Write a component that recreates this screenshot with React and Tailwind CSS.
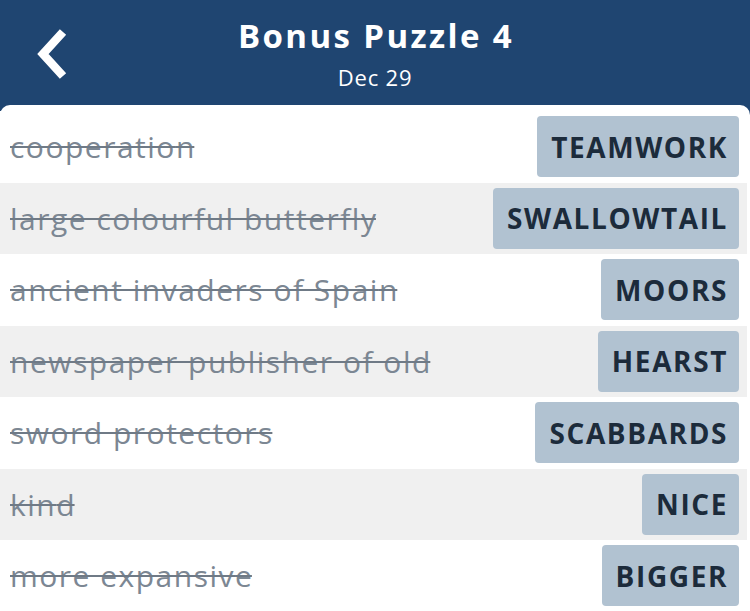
import React from 'react';

const clues = [
  { clue: 'cooperation', answer: 'TEAMWORK' },
  { clue: 'large colourful butterfly', answer: 'SWALLOWTAIL' },
  { clue: 'ancient invaders of Spain', answer: 'MOORS' },
  { clue: 'newspaper publisher of old', answer: 'HEARST' },
  { clue: 'sword protectors', answer: 'SCABBARDS' },
  { clue: 'kind', answer: 'NICE' },
  { clue: 'more expansive', answer: 'BIGGER' },
];

const App = () => {
  return (
    <div className="w-[750px] h-[611px] overflow-hidden bg-[#1f4571]" style={{ fontFamily: '"Open Sans", Lato, sans-serif' }}>
      {/* Header */}
      <header className="relative h-[105px] flex flex-col items-center text-white">
        <button className="absolute left-[30px] top-[24px] w-[44px] h-[60px] flex items-center justify-center">
          <svg width="44" height="60" viewBox="0 0 44 60">
            <path d="M33 8 L13 30 L33 52" fill="none" stroke="white" strokeWidth="8.5" strokeLinecap="butt" strokeLinejoin="miter" />
          </svg>
        </button>
        <h1 className="mt-[14px] pl-[2px] text-[33px] leading-[44px] font-bold tracking-[2.4px]">Bonus Puzzle 4</h1>
        <p className="mt-[5px] text-[22px] leading-[28px] tracking-[0.8px]">Dec 29</p>
      </header>

      {/* Clue list */}
      <div className="bg-white rounded-t-[10px] pt-[6px] h-[506px] pr-[3px]">
        {clues.map((item, i) => (
          <div
            key={item.clue}
            className={`h-[71.5px] flex items-center justify-between pl-[10px] pr-[8px] ${i % 2 === 1 ? 'bg-[#f0f0f0]' : 'bg-white'}`}
          >
            {/* last letter untracked so the strike stops at the word */}
            <span className="text-[30px] tracking-[1.5px] text-[#7c8793] line-through decoration-[2px] decoration-[#6f7a86]">
              {item.clue.slice(0, -1)}
              <span className="tracking-normal">{item.clue.slice(-1)}</span>
            </span>
            <span className="h-[61px] flex items-center pl-[14px] pr-[11px] rounded-[4px] bg-[#b1c2d1] text-[#1c2b3b] text-[28px] font-bold tracking-[1.6px]">
              {item.answer}
            </span>
          </div>
        ))}
      </div>
    </div>
  );
};

export default App;
